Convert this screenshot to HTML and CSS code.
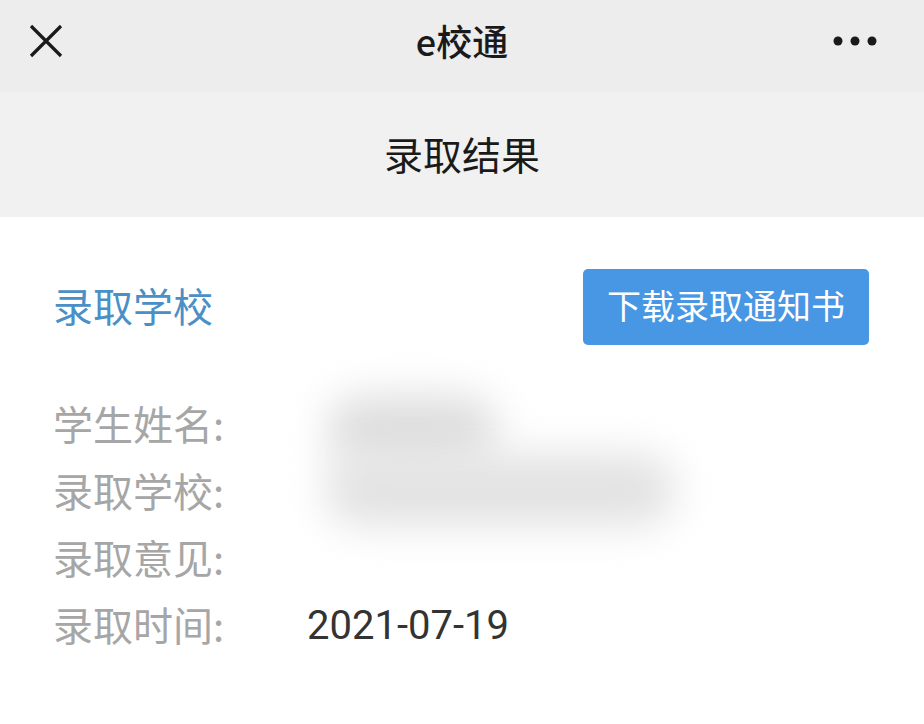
FILE: index.html
```html
<!DOCTYPE html>
<html lang="zh-CN">
<head>
<meta charset="utf-8">
<link rel="stylesheet" href="styles.css">
</head>
<body>
<div class="page">
  <header class="topbar">
    <svg class="close" width="34" height="34" viewBox="0 0 34 34"><path d="M2 2 L32 32 M32 2 L2 32" stroke="#1a1a1a" stroke-width="3.2" fill="none"/></svg>
    <div class="app-title">e校通</div>
    <svg class="more" width="44" height="12" viewBox="0 0 44 12"><circle cx="5" cy="6" r="4.5" fill="#1a1a1a"/><circle cx="22" cy="6" r="4.5" fill="#1a1a1a"/><circle cx="39" cy="6" r="4.5" fill="#1a1a1a"/></svg>
  </header>
  <div class="subbar">录取结果</div>
  <main class="content">
    <div class="head-row">
      <div class="section-title">录取学校</div>
      <button class="download">下载录取通知书</button>
    </div>
    <div class="details">
      <div class="row"><span class="label">学生姓名:</span><span class="value"><span class="blur blur-name"></span></span></div>
      <div class="row"><span class="label">录取学校:</span><span class="value"><span class="blur blur-school"></span></span></div>
      <div class="row"><span class="label">录取意见:</span><span class="value"></span></div>
      <div class="row"><span class="label">录取时间:</span><span class="value date">2021-07-19</span></div>
    </div>
  </main>
</div>
</body>
</html>
```
FILE: styles.css
```css
html, body {
  margin: 0;
  padding: 0;
  background: #ffffff;
}
.page {
  width: 924px;
  height: 724px;
  overflow: hidden;
  font-family: "Noto Sans CJK SC", "Liberation Sans", sans-serif;
  display: flex;
  flex-direction: column;
}
.topbar {
  height: 92px;
  background: #ededed;
  display: flex;
  align-items: center;
  justify-content: space-between;
  padding: 0 47px 0 29px;
  box-sizing: border-box;
  position: relative;
}
.close {
  margin-top: -10px;
}
.more {
  margin-top: -10px;
}
.app-title {
  position: absolute;
  left: 0;
  right: 0;
  top: 17px;
  text-align: center;
  font-size: 36px;
  line-height: 46px;
  color: #1a1a1a;
  font-weight: 500;
  pointer-events: none;
}
.subbar {
  height: 125px;
  background: #f1f1f1;
  display: flex;
  align-items: center;
  justify-content: center;
  font-size: 39px;
  color: #1a1a1a;
  padding-bottom: 4px;
  box-sizing: border-box;
}
.content {
  flex: 1;
  background: #ffffff;
  padding: 52px 55px 0 53px;
}
.head-row {
  display: flex;
  align-items: center;
  justify-content: space-between;
}
.section-title {
  font-size: 40px;
  color: #4a8fc6;
  margin-top: -4px;
}
.download {
  width: 286px;
  height: 76px;
  background: #4897e4;
  border: none;
  border-radius: 5px;
  color: #ffffff;
  font-family: "Noto Sans CJK SC", "Liberation Sans", sans-serif;
  font-size: 34px;
  padding: 0;
  padding-bottom: 6px;
}
.details {
  margin-top: 44px;
}
.row {
  display: flex;
  align-items: center;
  height: 67px;
}
.label {
  width: 254px;
  flex: none;
  font-size: 40px;
  color: #a6a6a6;
}
.value {
  font-size: 40px;
  color: #333333;
  position: relative;
  height: 67px;
  display: flex;
  align-items: center;
}
.date {
  font-family: Roboto, "Liberation Sans", sans-serif;
  font-size: 40px;
  margin-top: 4px;
}
.blur {
  display: block;
  filter: blur(20px);
  border-radius: 34px;
}
.blur-name {
  width: 170px;
  height: 70px;
  margin-left: 20px;
  margin-top: 14px;
  background: #dedede;
}
.blur-school {
  width: 350px;
  height: 72px;
  margin-left: 18px;
  background: #e2e2e2;
}
```
